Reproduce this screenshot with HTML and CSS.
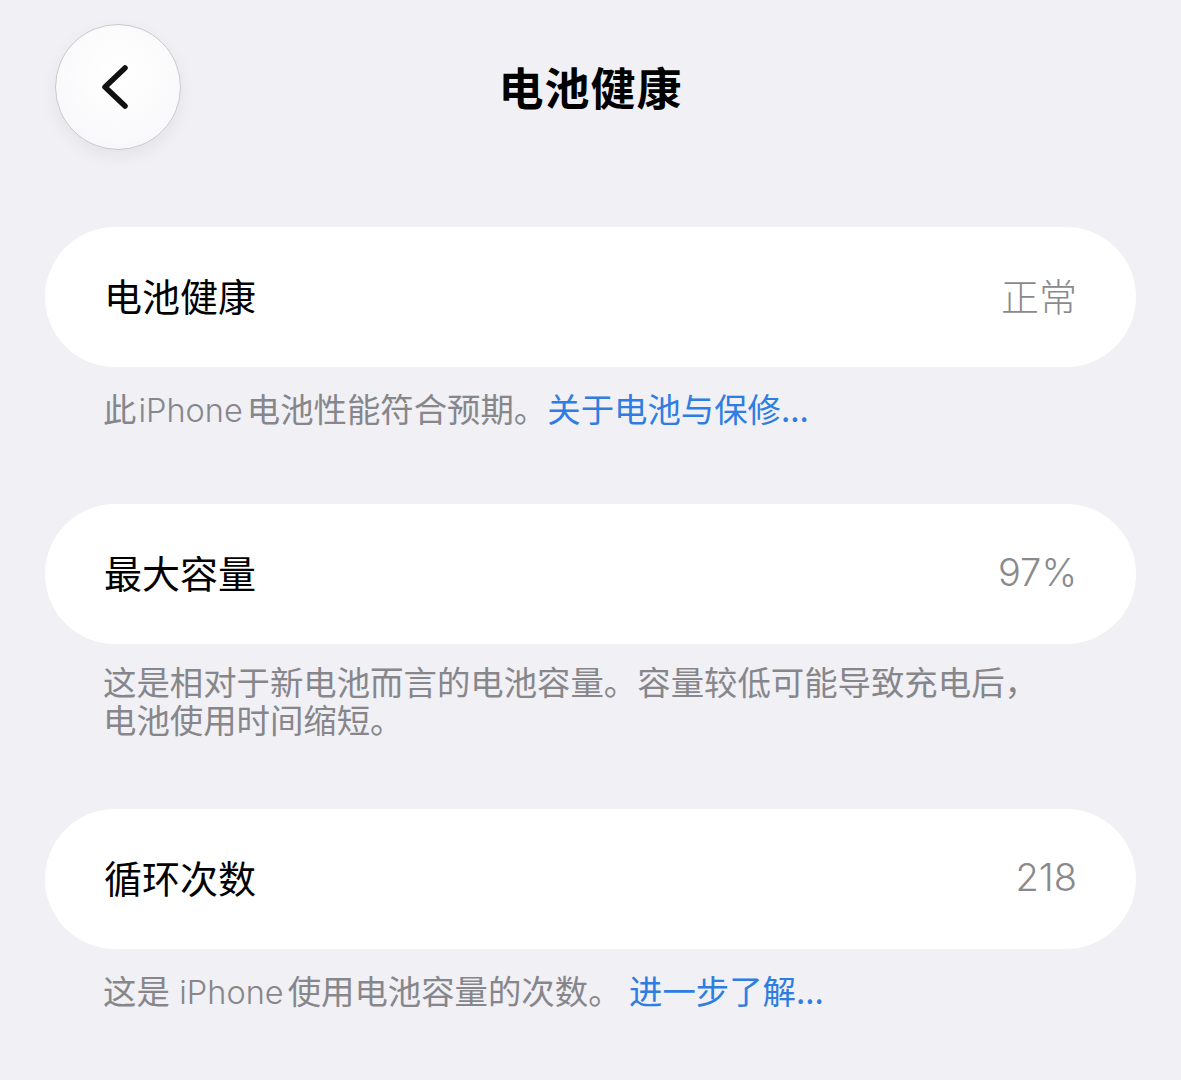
FILE: index.html
```html
<!DOCTYPE html>
<html lang="zh-CN">
<head>
  <meta charset="UTF-8" />
  <meta name="viewport" content="width=device-width, initial-scale=1.0">
  <title>电池健康</title>
  <link rel="stylesheet" href="styles.css">
</head>
<body>
<div class="page">
  <header class="nav">
    <button class="back" aria-label="返回">
      <svg width="30" height="46" viewBox="0 0 30 46">
        <path d="M25 4 L5 23 L25 42" fill="none" stroke="#111" stroke-width="5.5" stroke-linecap="round" stroke-linejoin="round"/>
      </svg>
    </button>
    <h1 class="title">电池健康</h1>
  </header>

  <section class="group">
    <div class="card">
      <span class="label">电池健康</span>
      <span class="value">正常</span>
    </div>
    <p class="note">此<span class="latin">iPhone</span>电池性能符合预期。<a href="#" class="link">关于电池与保修...</a></p>
  </section>

  <section class="group">
    <div class="card">
      <span class="label">最大容量</span>
      <span class="value">97%</span>
    </div>
    <p class="note multi">这是相对于新电池而言的电池容量。容量较低可能导致充电后，<br>电池使用时间缩短。</p>
  </section>

  <section class="group">
    <div class="card">
      <span class="label">循环次数</span>
      <span class="value">218</span>
    </div>
    <p class="note">这是 <span class="latin">iPhone</span>使用电池容量的次数。 <a href="#" class="link">进一步了解...</a></p>
  </section>
</div>
</body>
</html>
```

FILE: styles.css
```css
body {
  margin: 0;
  background: #f0f0f5;
  font-family: "Inter", "Noto Sans CJK SC", sans-serif;
  color: #000;
}
.page {
  padding: 24px 45px 0;
}
.nav {
  position: relative;
  height: 126px;
  display: flex;
  align-items: center;
  justify-content: center;
  margin-bottom: 77px;
}
.back {
  position: absolute;
  left: 10px;
  top: 0;
  width: 126px;
  height: 126px;
  border-radius: 50%;
  border: 1.5px solid #c9c9cd;
  background: radial-gradient(circle at 50% 40%, #ffffff 0%, #f9f9fb 70%, #f1f1f5 100%);
  box-shadow: 0 6px 18px rgba(0,0,0,0.06);
  display: flex;
  align-items: center;
  justify-content: center;
  padding: 0 6px 0 0;
}
.title {
  margin: 0;
  font-family: "Noto Sans CJK SC", sans-serif;
  font-size: 45px;
  font-weight: 700;
  letter-spacing: 1px;
  padding-bottom: 2px;
}
.card {
  background: #fff;
  height: 140px;
  border-radius: 70px;
  display: flex;
  align-items: center;
  justify-content: space-between;
  padding: 0 59px 5px;
  box-sizing: border-box;
}
.label {
  font-family: "Noto Sans CJK SC", sans-serif;
  font-size: 38px;
  font-weight: 400;
}
.value {
  font-family: "Inter", "Noto Sans CJK SC", sans-serif;
  font-size: 38px;
  font-weight: 300;
  color: #8a8a8e;
}
.note {
  margin: 0 0 74px;
  padding: 22px 58px 0;
  font-family: "Noto Sans CJK SC", sans-serif;
  font-size: 33.4px;
  line-height: 38px;
  color: #86868b;
}
.note.multi {
  padding-top: 18px;
  margin-bottom: 71px;
}
.latin {
  font-family: "Inter", sans-serif;
  font-size: 32.5px;
  font-weight: 300;
  padding: 0 4px 0 2px;
}
.link {
  color: #2f7de1;
  text-decoration: none;
}
```
